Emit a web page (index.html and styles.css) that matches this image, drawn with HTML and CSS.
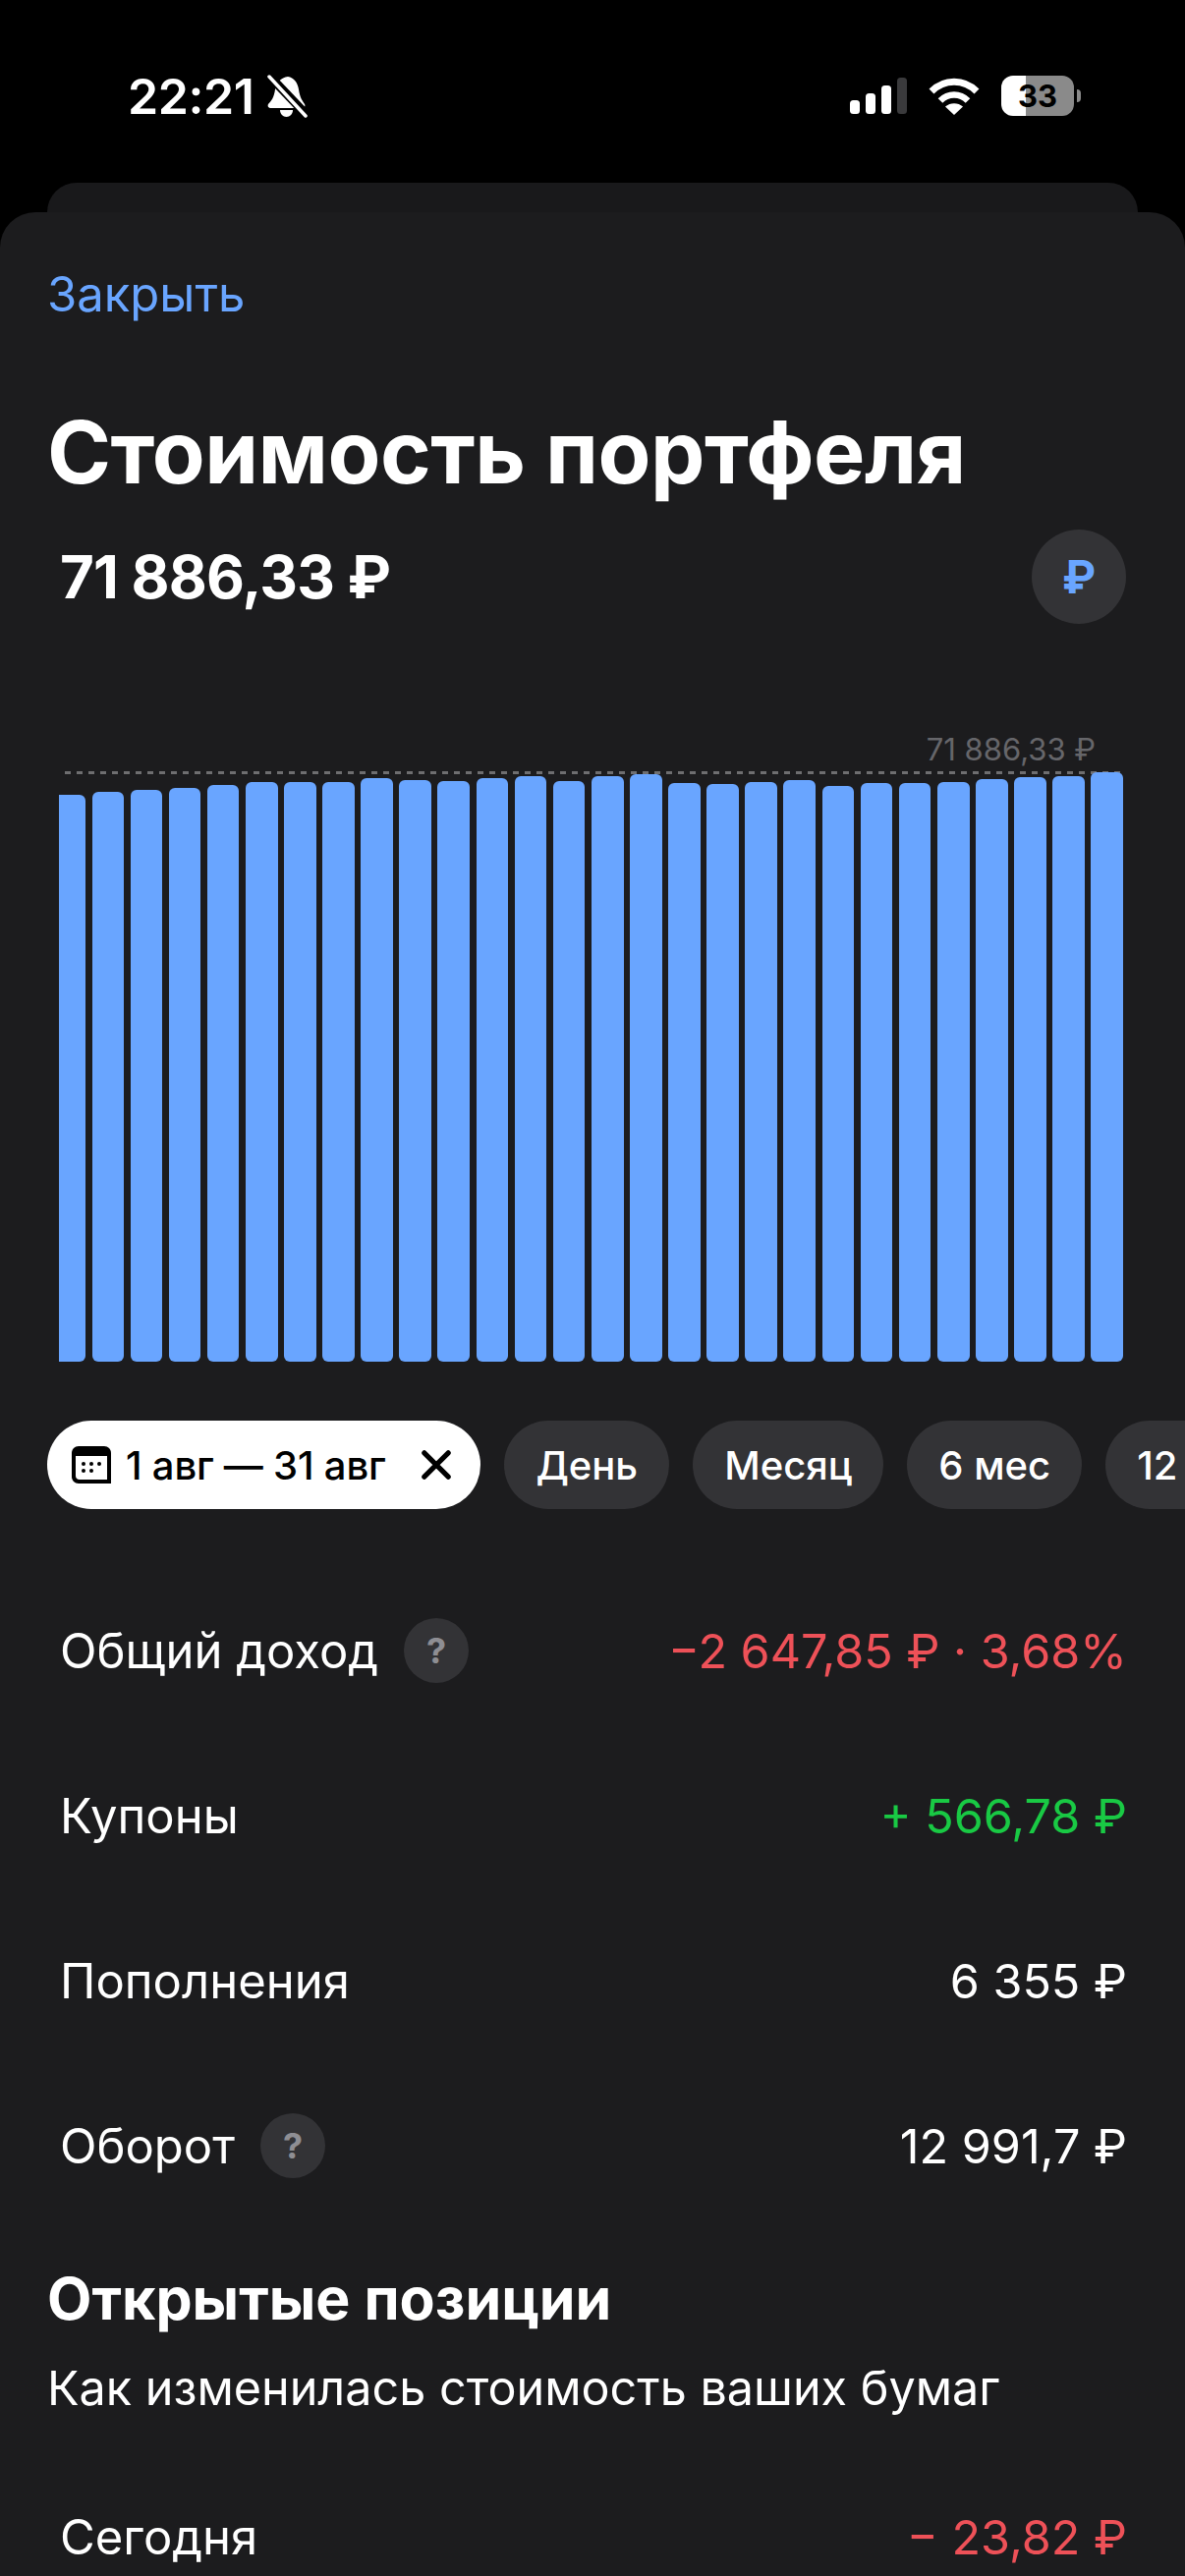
FILE: index.html
```html
<!DOCTYPE html>
<html lang="ru">
<head>
<meta charset="utf-8">
<title>Стоимость портфеля</title>
<link rel="stylesheet" href="styles.css">
</head>
<body>
<div class="status">
  <div class="status-left">
    <span class="time">22:21</span>
    <svg class="bell" viewBox="0 0 42 44" width="42" height="44">
      <path fill="#fff" d="M22 2C28 3 32 8 33 15C34 23 37 27 39 30C40 32 39 34 36 34H5C2 34 1 32 2 30C5 27 8 23 9 15C10 8 15 3 22 2Z"/>
      <path fill="#fff" d="M14 36H27C27 40 24 43 20.500 43C17 43 14 40 14 36Z"/>
      <path stroke="#000" stroke-width="9" d="M1 -1L43 43"/>
      <path stroke="#fff" stroke-width="3.500" stroke-linecap="round" d="M3 2L40 42"/>
    </svg>
  </div>
  <div class="status-right">
    <svg class="signal" viewBox="0 0 58 37" width="58" height="37">
      <rect x="0" y="23" width="10" height="14" rx="3.500" fill="#fff"/>
      <rect x="16" y="16" width="10" height="21" rx="3.500" fill="#fff"/>
      <rect x="32" y="8" width="10" height="29" rx="3.500" fill="#fff"/>
      <rect x="48" y="0" width="10" height="37" rx="3.500" fill="#3a3a3c"/>
    </svg>
    <svg class="wifi" viewBox="0 0 52 38" width="52" height="38">
      <path fill="none" stroke="#fff" stroke-width="7" d="M3 14C16 1 36 1 49 14"/>
      <path fill="none" stroke="#fff" stroke-width="6.500" d="M12 23.500C20 15.500 32 15.500 40 23.500"/>
      <path fill="#fff" d="M26 38L17 29.500C22 25 30 25 35 29.500Z"/>
    </svg>
    <div class="battery">
      <span class="battery-level">33</span>
      <span class="battery-nub"></span>
    </div>
  </div>
</div>

<div class="back-card"></div>

<main class="sheet">
  <a class="close">Закрыть</a>
  <h1 class="title">Стоимость портфеля</h1>
  <div class="total">
    <span class="total-value">71 886,33 ₽</span>
    <span class="currency">₽</span>
  </div>

  <section class="chart">
    <div class="chart-label">71 886,33 ₽</div>
    <div class="chart-line"></div>
    <div class="bars">
      <div class="bar bar-first" style="height:577px"></div>
      <div class="bar" style="height:580px"></div>
      <div class="bar" style="height:582px"></div>
      <div class="bar" style="height:584px"></div>
      <div class="bar" style="height:587px"></div>
      <div class="bar" style="height:590px"></div>
      <div class="bar" style="height:590px"></div>
      <div class="bar" style="height:590px"></div>
      <div class="bar" style="height:594px"></div>
      <div class="bar" style="height:592px"></div>
      <div class="bar" style="height:591px"></div>
      <div class="bar" style="height:594px"></div>
      <div class="bar" style="height:596px"></div>
      <div class="bar" style="height:591px"></div>
      <div class="bar" style="height:596px"></div>
      <div class="bar" style="height:598px"></div>
      <div class="bar" style="height:589px"></div>
      <div class="bar" style="height:588px"></div>
      <div class="bar" style="height:590px"></div>
      <div class="bar" style="height:592px"></div>
      <div class="bar" style="height:586px"></div>
      <div class="bar" style="height:589px"></div>
      <div class="bar" style="height:589px"></div>
      <div class="bar" style="height:590px"></div>
      <div class="bar" style="height:593px"></div>
      <div class="bar" style="height:595px"></div>
      <div class="bar" style="height:596px"></div>
      <div class="bar" style="height:600px"></div>
    </div>
  </section>

  <nav class="pills">
    <div class="pill pill-active">
      <svg class="cal" viewBox="0 0 40 38" width="40" height="38">
        <path fill="#000" d="M7 0H33C37 0 40 3 40 7V38H7C3 38 0 35 0 31V7C0 3 3 0 7 0Z"/>
        <path fill="#fff" d="M4 10H36V34H8C5.500 34 4 32.500 4 30Z"/>
        <g fill="#000">
          <circle cx="12" cy="18" r="2"/><circle cx="20" cy="18" r="2"/><circle cx="28" cy="18" r="2"/>
          <circle cx="12" cy="25" r="2"/><circle cx="20" cy="25" r="2"/>
        </g>
      </svg>
      <span class="pill-text">1 авг — 31 авг</span>
      <svg class="x" viewBox="0 0 32 32" width="30" height="30">
        <path fill="none" stroke="#000" stroke-width="5.500" stroke-linecap="round" d="M3 3L29 29M29 3L3 29"/>
      </svg>
    </div>
    <div class="pill">День</div>
    <div class="pill">Месяц</div>
    <div class="pill">6 мес</div>
    <div class="pill">12 мес</div>
  </nav>

  <section class="rows">
    <div class="row">
      <div class="row-label">Общий доход <span class="help">?</span></div>
      <div class="red">−2 647,85 ₽ · 3,68%</div>
    </div>
    <div class="row">
      <div class="row-label">Купоны</div>
      <div class="green">+ 566,78 ₽</div>
    </div>
    <div class="row">
      <div class="row-label">Пополнения</div>
      <div>6 355 ₽</div>
    </div>
    <div class="row">
      <div class="row-label">Оборот <span class="help">?</span></div>
      <div>12 991,7 ₽</div>
    </div>
  </section>

  <h2 class="subhead">Открытые позиции</h2>
  <p class="subtext">Как изменилась стоимость ваших бумаг</p>
  <div class="row row-last">
    <div class="row-label">Сегодня</div>
    <div class="red">− 23,82 ₽</div>
  </div>
</main>
</body>
</html>
```
FILE: styles.css
```css
* { box-sizing: border-box; }
html, body { margin: 0; padding: 0; }
body {
  width: 1206px;
  height: 2622px;
  overflow: hidden;
  background: #000;
  color: #fff;
  font-family: Inter, "Noto Sans", sans-serif;
}
.status {
  height: 186px;
  padding: 71px 113px 0 130px;
  display: flex;
  justify-content: space-between;
  align-items: flex-start;
}
.status-left { display: flex; align-items: center; gap: 12px; height: 54px; }
.time { font-size: 50px; font-weight: 600; line-height: 54px; letter-spacing: -0.4px; }
.bell { display: block; }
.status-right { display: flex; align-items: flex-start; padding-top: 8px; }
.wifi { margin-left: 22px; }
.battery {
  margin-left: 22px;
  width: 74px;
  height: 41px;
  margin-top: -2px;
  border-radius: 12px;
  background: linear-gradient(90deg, #fff 0 25px, #8a8a8a 25px);
  color: #000;
  font-size: 31px;
  font-weight: 700;
  line-height: 41px;
  text-align: center;
  position: relative;
}
.battery-level { display: block; }
.battery-nub {
  position: absolute;
  right: -7px;
  top: 14px;
  width: 4px;
  height: 13px;
  background: #8a8a8a;
  border-radius: 0 4px 4px 0;
}
.back-card {
  height: 30px;
  margin: 0 48px;
  background: #19191b;
  border-radius: 32px 32px 0 0;
}
.sheet {
  height: 2406px;
  padding: 0 60px 0 48px;
  background: #1c1c1e;
  border-radius: 36px 36px 0 0;
  overflow: hidden;
}
.close {
  display: block;
  margin-top: 55px;
  color: #69a5ff;
  font-size: 49px;
  line-height: 58px;
}
.title {
  margin: 81px 0 0;
  font-size: 88px;
  font-weight: 700;
  line-height: 100px;
  letter-spacing: -0.5px;
}
.total {
  display: flex;
  justify-content: space-between;
  align-items: center;
  margin-top: 29px;
  padding-left: 13px;
}
.total-value { font-size: 60px; font-weight: 700; line-height: 96px; letter-spacing: -0.8px; }
.currency {
  width: 96px;
  height: 96px;
  border-radius: 50%;
  background: #333336;
  color: #69a5ff;
  font-size: 46px;
  font-weight: 700;
  line-height: 96px;
  text-align: center;
}
.chart { margin: 110px 3px 0 12px; }
.chart-label {
  padding-right: 28px;
  text-align: right;
  color: #66666a;
  font-size: 31px;
  line-height: 36px;
}
.chart-line {
  height: 3px;
  margin: 4px 3px -2px 6px;
  background: repeating-linear-gradient(90deg, #6e6e70 0 6px, transparent 6px 12px);
}
.bars {
  display: flex;
  align-items: flex-end;
  gap: 6.500px;
  height: 600px;
}
.bar {
  flex: 1;
  background: #69a5ff;
  border-radius: 6px;
}
.bar-first { flex: none; width: 27px; border-radius: 0 6px 6px 0; }
.pills {
  display: flex;
  gap: 24px;
  margin-top: 60px;
  width: 1300px;
}
.pill {
  flex: none;
  height: 90px;
  padding: 0 32px;
  display: flex;
  align-items: center;
  border-radius: 45px;
  background: #333336;
  font-size: 40px;
  font-weight: 500;
}
.pill-active {
  padding: 0 30px 0 25px;
  gap: 15px;
  background: #fff;
  color: #000;
}
.pill-text { letter-spacing: -0.2px; }
.x { margin-left: 22px; }
.rows { margin-top: 60px; padding: 0 0 0 13px; }
.row {
  height: 168px;
  margin-right: -1px;
  display: flex;
  justify-content: space-between;
  align-items: center;
  font-size: 48.500px;
}
.row-label { display: flex; align-items: center; gap: 26px; font-size: 49px; }
.help {
  width: 66px;
  height: 66px;
  border-radius: 50%;
  background: #333336;
  color: #8e8e93;
  font-size: 36px;
  font-weight: 700;
  line-height: 66px;
  text-align: center;
}
.red { color: #ee5158; }
.green { color: #19c944; }
.subhead {
  margin: 38px 0 0;
  font-size: 59px;
  font-weight: 700;
  line-height: 68px;
}
.subtext {
  margin: 29px 0 0;
  font-size: 48.500px;
  line-height: 56px;
}
.row-last { margin-top: 39px; padding-left: 13px; }
```
